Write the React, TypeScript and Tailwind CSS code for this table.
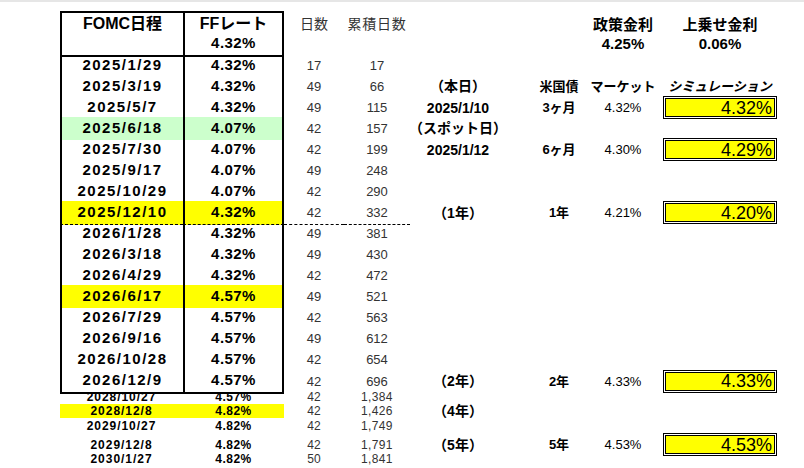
import React from "react";

const COLS =
  "grid grid-cols-[60px_123px_101px_60px_66px_96px_20px_66px_62px_132px]";

type Side = {
  mid?: string;
  term?: string;
  market?: string;
  sim?: string;
};

type Row = {
  date: string;
  rate: string;
  days: string;
  total: string;
  bg?: string;
  dashed?: boolean;
  side?: Side;
};

const mainRows: Row[] = [
  { date: "2025/1/29", rate: "4.32%", days: "17", total: "17" },
  { date: "2025/3/19", rate: "4.32%", days: "49", total: "66", side: { mid: "（本日）" } },
  {
    date: "2025/5/7",
    rate: "4.32%",
    days: "49",
    total: "115",
    side: { mid: "2025/1/10", term: "3ヶ月", market: "4.32%", sim: "4.32%" },
  },
  { date: "2025/6/18", rate: "4.07%", days: "42", total: "157", bg: "bg-[#ccffcc]", side: { mid: "（スポット日）" } },
  {
    date: "2025/7/30",
    rate: "4.07%",
    days: "42",
    total: "199",
    side: { mid: "2025/1/12", term: "6ヶ月", market: "4.30%", sim: "4.29%" },
  },
  { date: "2025/9/17", rate: "4.07%", days: "49", total: "248" },
  { date: "2025/10/29", rate: "4.07%", days: "42", total: "290" },
  {
    date: "2025/12/10",
    rate: "4.32%",
    days: "42",
    total: "332",
    bg: "bg-[#ffff00]",
    dashed: true,
    side: { mid: "（1年）", term: "1年", market: "4.21%", sim: "4.20%" },
  },
  { date: "2026/1/28", rate: "4.32%", days: "49", total: "381" },
  { date: "2026/3/18", rate: "4.32%", days: "49", total: "430" },
  { date: "2026/4/29", rate: "4.32%", days: "42", total: "472" },
  { date: "2026/6/17", rate: "4.57%", days: "49", total: "521", bg: "bg-[#ffff00]" },
  { date: "2026/7/29", rate: "4.57%", days: "42", total: "563" },
  { date: "2026/9/16", rate: "4.57%", days: "49", total: "612" },
  { date: "2026/10/28", rate: "4.57%", days: "42", total: "654" },
  {
    date: "2026/12/9",
    rate: "4.57%",
    days: "42",
    total: "696",
    side: { mid: "（2年）", term: "2年", market: "4.33%", sim: "4.33%" },
  },
];

// rows under the boxed table are squeezed, like in the sheet
const smallRows: (Row & { h: string })[] = [
  { date: "2028/10/27", rate: "4.57%", days: "42", total: "1,384", h: "h-[14px]" },
  { date: "2028/12/8", rate: "4.82%", days: "42", total: "1,426", h: "h-[14px]", bg: "bg-[#ffff00]", side: { mid: "（4年）" } },
  { date: "2029/10/27", rate: "4.82%", days: "42", total: "1,749", h: "h-[15px]" },
  {
    date: "2029/12/8",
    rate: "4.82%",
    days: "42",
    total: "1,791",
    h: "h-[17px]",
    side: { mid: "（5年）", term: "5年", market: "4.53%", sim: "4.53%" },
  },
  { date: "2030/1/27", rate: "4.82%", days: "50", total: "1,841", h: "h-[17px]" },
];

function SimBox({ value }: { value: string }) {
  return (
    <div className="mx-[9px] flex h-[23px] w-[114px] shrink-0 items-center justify-end border-[3px] border-double border-black bg-[#ffff00] bg-clip-padding pr-[2px] text-[18px] leading-none text-black">
      {value}
    </div>
  );
}

function SideCells({ side }: { side?: Side }) {
  return (
    <>
      <div className="flex items-center justify-center whitespace-nowrap text-[14px] font-bold leading-none">
        {side?.mid}
      </div>
      <div />
      <div className="flex items-center justify-center whitespace-nowrap text-[13px] font-bold leading-none">
        {side?.term}
      </div>
      <div className="flex items-center justify-center whitespace-nowrap text-[13px] leading-none">
        {side?.market}
      </div>
      <div className="flex items-center">{side?.sim && <SimBox value={side.sim} />}</div>
    </>
  );
}

export default function App() {
  const dash = "border-b border-b-black [border-bottom-style:dashed]";

  return (
    <div className="h-[468px] w-[804px] overflow-hidden border-t-2 border-[#e6e6e6] bg-white pt-[9px] font-['Liberation_Sans','Noto_Sans_CJK_JP',sans-serif] text-black">
      {/* header line 1 */}
      <div className={`${COLS} h-[21px]`}>
        <div />
        <div className="flex items-end justify-center border-l-2 border-t-2 border-black text-[16px] font-bold leading-none">
          FOMC日程
        </div>
        <div className="flex items-end justify-center border-x-2 border-t-2 border-black text-[16px] font-bold leading-none">
          FFレート
        </div>
        <div className="flex items-end justify-center pb-[1px] text-[14px] leading-none text-[#333]">
          日数
        </div>
        <div className="flex items-end justify-center pb-[1px] text-[14px] leading-none tracking-[0.05em] text-[#333]">
          累積日数
        </div>
        <div />
        <div />
        <div />
        <div className="flex items-end justify-center whitespace-nowrap text-[15px] font-bold leading-none">
          政策金利
        </div>
        <div className="flex items-end justify-center whitespace-nowrap text-[15px] font-bold leading-none">
          上乗せ金利
        </div>
      </div>

      {/* header line 2 */}
      <div className={`${COLS} h-[22px]`}>
        <div />
        <div className="border-b-2 border-l-2 border-black" />
        <div className="flex items-center justify-center border-x-2 border-b-2 border-black text-[15px] font-bold tracking-[0.03em]">
          4.32%
        </div>
        <div />
        <div />
        <div />
        <div />
        <div />
        <div className="flex items-center justify-center text-[15px] font-bold">4.25%</div>
        <div className="flex items-center justify-center text-[15px] font-bold">0.06%</div>
      </div>

      {mainRows.map((r, i) => {
        const last = i === mainRows.length - 1;
        const edge = last ? "border-b-2 border-b-black" : r.dashed ? dash : "";
        const isHead = i === 1;
        return (
          <div key={r.date} className={`${COLS} h-[21px]`}>
            <div />
            <div
              className={`flex items-center justify-center border-l-2 border-l-black text-[15px] font-bold tracking-[0.1em] ${edge} ${r.bg ?? ""}`}
            >
              {r.date}
            </div>
            <div
              className={`flex items-center justify-center border-x-2 border-x-black text-[15px] font-bold tracking-[0.03em] ${edge} ${r.bg ?? ""}`}
            >
              {r.rate}
            </div>
            <div className={`flex items-center justify-center text-[13px] text-[#333] ${r.dashed ? dash : ""}`}>
              {r.days}
            </div>
            <div className={`flex items-center justify-center text-[13px] text-[#333] ${r.dashed ? dash : ""}`}>
              {r.total}
            </div>
            {isHead ? (
              <>
                <div className="flex items-center justify-center whitespace-nowrap text-[14px] font-bold">
                  {r.side?.mid}
                </div>
                <div />
                <div className="flex items-center justify-center whitespace-nowrap text-[13px] font-bold">
                  米国債
                </div>
                <div className="flex items-center justify-center whitespace-nowrap text-[13px] font-bold">
                  マーケット
                </div>
                <div className="flex items-center justify-center whitespace-nowrap text-[13px] font-bold italic">
                  シミュレーション
                </div>
              </>
            ) : (
              <SideCells side={r.side} />
            )}
          </div>
        );
      })}

      {smallRows.map((r) => (
        <div key={r.date} className={`${COLS} ${r.h}`}>
          <div />
          <div className={`flex items-center justify-center text-[12px] font-bold leading-none tracking-[0.08em] ${r.bg ?? ""}`}>
            {r.date}
          </div>
          <div className={`flex items-center justify-center text-[12px] font-bold leading-none tracking-[0.04em] ${r.bg ?? ""}`}>
            {r.rate}
          </div>
          <div className="flex items-center justify-center text-[12px] leading-none text-[#333]">{r.days}</div>
          <div className="flex items-center justify-center text-[12px] leading-none tracking-[0.03em] text-[#333]">{r.total}</div>
          <SideCells side={r.side} />
        </div>
      ))}
    </div>
  );
}
